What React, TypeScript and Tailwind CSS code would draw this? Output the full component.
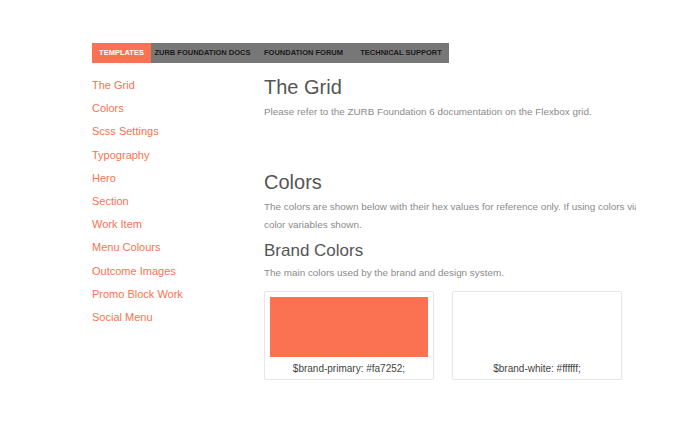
import React from 'react';

const navItems = [
  { label: 'Templates', width: 'w-[59px]' },
  { label: 'Zurb Foundation Docs', width: 'w-[103px]' },
  { label: 'Foundation Forum', width: 'w-[99px]' },
  { label: 'Technical Support', width: 'w-[96px]' },
];

const sideLinks = [
  'The Grid',
  'Colors',
  'Scss Settings',
  'Typography',
  'Hero',
  'Section',
  'Work Item',
  'Menu Colours',
  'Outcome Images',
  'Promo Block Work',
  'Social Menu',
];

const swatches = [
  { name: '$brand-primary: #fa7252;', swatch: 'bg-[#fa7252]' },
  { name: '$brand-white: #ffffff;', swatch: 'bg-white' },
];

const App: React.FC = () => {
  return (
    <div className="min-h-screen w-full bg-white pt-[43px] pl-[92px] font-['Liberation_Sans',Arial,sans-serif]">
      {/* Top nav */}
      <nav className="flex h-[20px] w-[357px] bg-[#777777]">
        {navItems.map((item, i) => (
          <a
            key={item.label}
            className={`${item.width} flex items-center justify-center whitespace-nowrap text-[7.5px] font-bold uppercase ${
              i === 0 ? 'bg-[#fa7252] text-white' : 'text-[#1a1a1a]'
            }`}
          >
            {item.label}
          </a>
        ))}
      </nav>

      <div className="flex">
        {/* Sidebar */}
        <aside className="w-[172px] shrink-0 pt-[11px]">
          <ul>
            {sideLinks.map((link) => (
              <li key={link} className="text-[11px] leading-[23.2px] text-[#fa7252]">
                {link}
              </li>
            ))}
          </ul>
        </aside>

        {/* Content */}
        <main className="w-[372px] overflow-hidden text-[#555555]">
          <h1 className="mt-[12px] text-[20px] leading-[24px] text-[#555555]">The Grid</h1>
          <p className="mt-[4px] whitespace-nowrap text-[9.9px] leading-[18px] text-[#8a8a8a]">
            Please refer to the ZURB Foundation 6 documentation on the Flexbox grid.
          </p>

          <h2 className="mt-[49px] text-[20px] leading-[24px] text-[#555555]">Colors</h2>
          <p className="mt-[4px] whitespace-nowrap text-[9.9px] leading-[18px] text-[#8a8a8a]">
            The colors are shown below with their hex values for reference only. If using colors via Sass use the
            <br />
            color variables shown.
          </p>

          <h3 className="mt-[7px] text-[17px] leading-[20px] text-[#555555]">Brand Colors</h3>
          <p className="mt-[3px] text-[9.9px] leading-[18px] text-[#8a8a8a]">
            The main colors used by the brand and design system.
          </p>

          <div className="mt-[9px] flex gap-[18px]">
            {swatches.map((s) => (
              <div
                key={s.name}
                className="w-[170px] rounded-[2px] border border-[#e6e6e6] px-[5px] pt-[5px] pb-[3px] shadow-[0_1px_2px_rgba(0,0,0,0.06)]"
              >
                <div className={`h-[60px] ${s.swatch}`} />
                <p className="mt-[5px] text-center text-[10px] leading-[14px] text-[#444444]">{s.name}</p>
              </div>
            ))}
          </div>
        </main>
      </div>
    </div>
  );
};

export default App;
